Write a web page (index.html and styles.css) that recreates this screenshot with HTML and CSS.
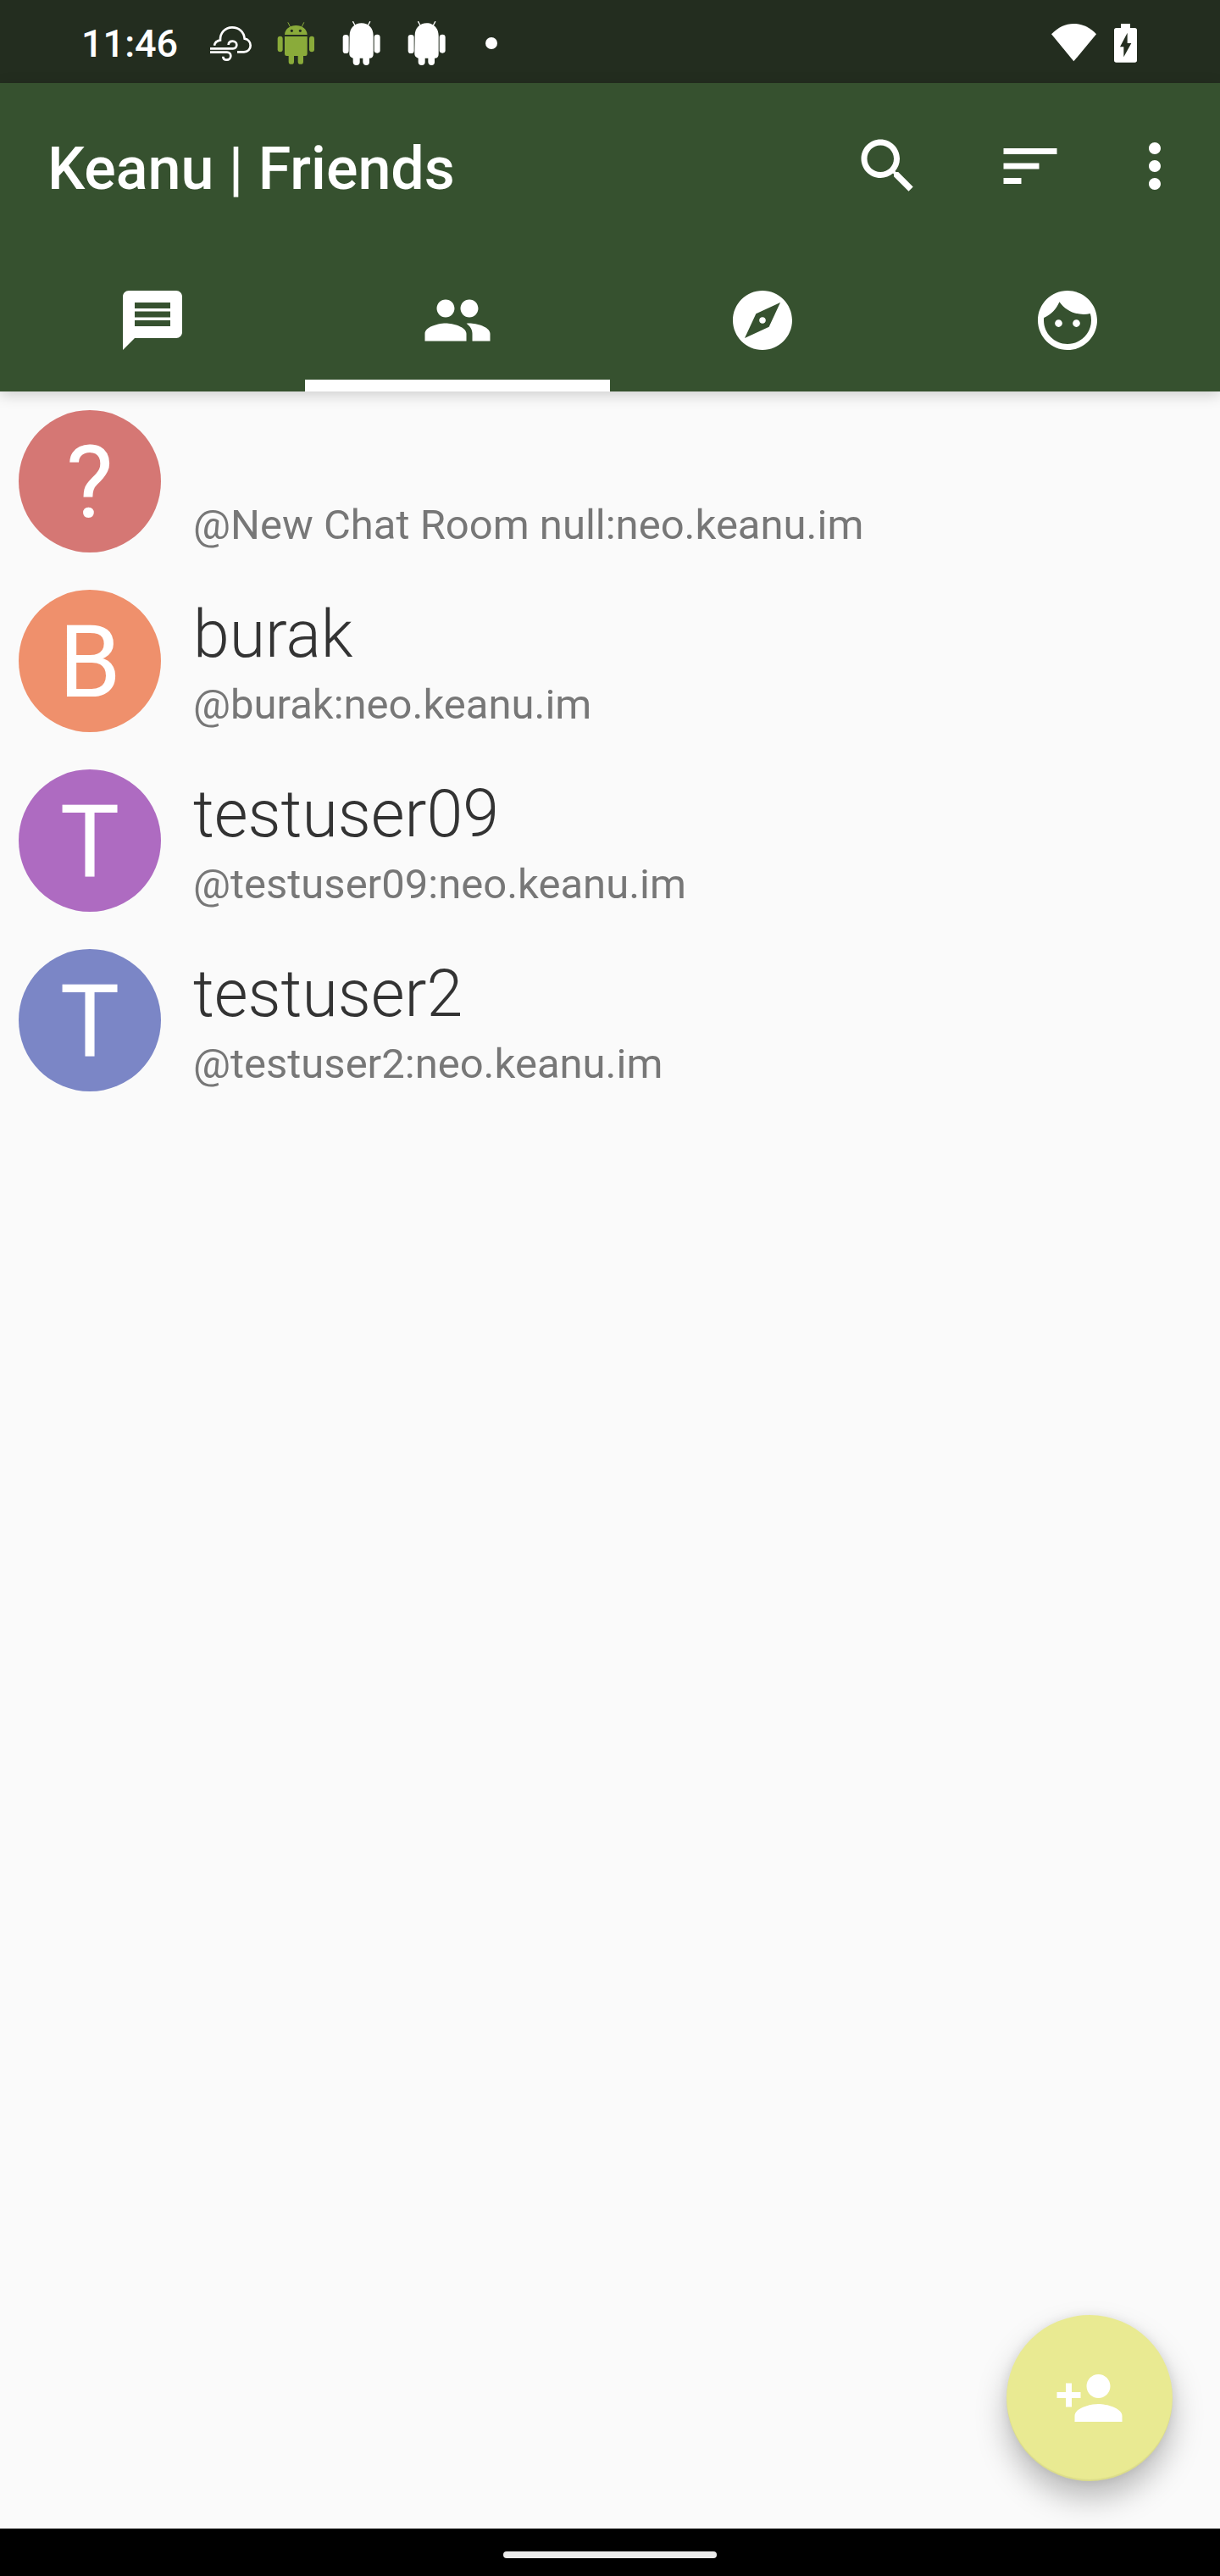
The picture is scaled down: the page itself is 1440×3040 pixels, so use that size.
FILE: index.html
```html
<!DOCTYPE html>
<html lang="en">
<head>
<meta charset="utf-8">
<meta name="viewport" content="width=device-width, initial-scale=1">
<title>Keanu | Friends</title>
<link rel="stylesheet" href="styles.css">
</head>
<body>
<div class="status-bar">
  <time class="clock">11:46</time>
  <div class="notifications">
    <svg class="notification" viewBox="462 57 231 180" aria-hidden="true">
      <g fill="none" stroke="#fff" stroke-width="8">
        <path d="M519 161c2-11 9-17 21-19c-1-26 17-45 42-45c24 0 42 16 44 40c12 2 21 12 21 24c0 13-10 23-23 23h-24"/>
        <path d="M504 172h81c8 0 13-6 13-13s-6-13-14-13c-9 0-15 5-15 13"/>
        <path d="M504 185h60c8 0 13 6 13 13s-6 14-14 14s-13-5-13-12"/>
      </g>
    </svg>
    <svg class="notification" viewBox="693 57 231 180" fill="#8aab3a" aria-hidden="true">
      <path d="M780 80l7 14M836 80l-7 14" stroke="#8aab3a" stroke-width="3" stroke-linecap="round"/>
      <path fill-rule="evenodd" d="M768 123c1-20 18-33 40-33s39 13 40 33zM793 104a5 5 0 1 0 0 10a5 5 0 0 0 0-10zM823 104a5 5 0 1 0 0 10a5 5 0 0 0 0-10z"/>
      <path d="M768 129h80v62q0 7-7 7h-7v20a9 9 0 0 1-19 0v-20h-14v20a9 9 0 0 1-19 0v-20h-7q-7 0-7-7z"/>
      <rect x="743" y="128" width="18" height="56" rx="9"/>
      <rect x="855" y="128" width="18" height="56" rx="9"/>
    </svg>
    <svg class="notification" viewBox="924 57 231 180" fill="#fff" aria-hidden="true">
      <path id="robot-antennae" d="M1010 77l7 13M1070 77l-7 13" stroke="#fff" stroke-width="4" stroke-linecap="round"/>
      <g id="robot">
        <path d="M998 126c0-27 18-44 42-44s42 17 42 44v65q0 15-14 15v14q0 11-11 11t-12-11v-14h-11v14q0 11-12 11t-12-11v-14q-13-5-13-15z"/>
        <rect x="974" y="123" width="21" height="66" rx="10"/>
        <rect x="1085" y="122" width="21" height="66" rx="10"/>
      </g>
    </svg>
    <svg class="notification" viewBox="924 57 231 180" fill="#fff" aria-hidden="true">
      <use href="#robot-antennae"/>
      <use href="#robot"/>
    </svg>
    <svg class="notification" viewBox="1386 57 231 180" fill="#fff" aria-hidden="true"><circle cx="1500" cy="153" r="21"/></svg>
  </div>
  <div class="system-icons">
    <svg class="system-icon" viewBox="111 57 183 180" fill="#fff" role="img" aria-label="Wi-Fi"><path d="M123 121c24-25 50-37 79-37s56 12 80 37L202 217z"/></svg>
    <svg class="system-icon" viewBox="294 57 183 180" fill="#fff" role="img" aria-label="Battery charging"><path fill-rule="evenodd" d="M369 84h33v15h16q8 0 8 8v106q0 8-8 8h-65q-8 0-8-8v-106q0-8 8-8h16zM392 116l-26 50h13v36l27-49h-14z"/></svg>
  </div>
</div>

<header class="app-header">
  <div class="toolbar">
    <h1 class="title">Keanu | Friends</h1>
    <button class="action" type="button" aria-label="Search">
      <svg class="icon" viewBox="0 0 24 24"><path d="M15.5 14h-.79l-.28-.27C15.41 12.59 16 11.11 16 9.5 16 5.91 13.09 3 9.5 3S3 5.91 3 9.5 5.91 16 9.5 16c1.61 0 3.09-.59 4.23-1.57l.27.28v.79l5 4.99L20.49 19l-4.99-5zm-6 0C7.01 14 5 11.99 5 9.5S7.01 5 9.5 5 14 7.01 14 9.5 11.99 14 9.5 14z"/></svg>
    </button>
    <button class="action" type="button" aria-label="Sort">
      <svg class="icon" viewBox="0 0 24 24"><path d="M3 18h6v-2H3v2zM3 6v2h18V6H3zm0 7h12v-2H3v2z"/></svg>
    </button>
    <button class="action action-more" type="button" aria-label="More options">
      <svg class="icon" viewBox="0 0 24 24"><path d="M12 8c1.100 0 2-.9 2-2s-.9-2-2-2-2 .9-2 2 .9 2 2 2zm0 2c-1.100 0-2 .9-2 2s.9 2 2 2 2-.9 2-2-.9-2-2-2zm0 6c-1.100 0-2 .9-2 2s.9 2 2 2 2-.9 2-2-.9-2-2-2z"/></svg>
    </button>
  </div>
  <nav class="tabs">
    <a class="tab" href="#chats" aria-label="Chats">
      <svg class="icon" viewBox="0 0 24 24"><path d="M20 2H4c-1.100 0-1.990.9-1.990 2L2 22l4-4h14c1.100 0 2-.9 2-2V4c0-1.100-.9-2-2-2zM18 14H6v-2h12v2zm0-3H6V9h12v2zm0-3H6V6h12v2z"/></svg>
    </a>
    <a class="tab tab-active" href="#friends" aria-label="Friends" aria-current="page">
      <svg class="icon" viewBox="0 0 24 24"><path d="M16 11c1.660 0 2.990-1.340 2.990-3S17.660 5 16 5c-1.660 0-3 1.340-3 3s1.340 3 3 3zm-8 0c1.660 0 2.990-1.340 2.990-3S9.660 5 8 5C6.340 5 5 6.340 5 8s1.340 3 3 3zm0 2c-2.330 0-7 1.170-7 3.500V19h14v-2.500c0-2.330-4.670-3.500-7-3.500zm8 0c-.29 0-.62.020-.97.050 1.160.84 1.970 1.970 1.970 3.450V19h6v-2.500c0-2.330-4.670-3.500-7-3.500z"/></svg>
    </a>
    <a class="tab" href="#discover" aria-label="Discover">
      <svg class="icon" viewBox="0 0 24 24"><path d="M12 10.900c-.61 0-1.100.49-1.100 1.100s.49 1.100 1.100 1.100c.61 0 1.100-.49 1.100-1.100s-.49-1.100-1.100-1.100zM12 2C6.480 2 2 6.480 2 12s4.480 10 10 10 10-4.480 10-10S17.520 2 12 2zm2.190 12.190L6 18l3.810-8.190L18 6l-3.810 8.190z"/></svg>
    </a>
    <a class="tab" href="#profile" aria-label="Profile">
      <svg class="icon" viewBox="0 0 24 24"><path d="M9 11.750c-.69 0-1.250.56-1.250 1.250s.56 1.250 1.250 1.250 1.250-.56 1.250-1.250-.56-1.250-1.250-1.250zm6 0c-.69 0-1.250.56-1.250 1.250s.56 1.250 1.250 1.250 1.250-.56 1.250-1.250-.56-1.250-1.250-1.250zM12 2C6.480 2 2 6.480 2 12s4.480 10 10 10 10-4.480 10-10S17.520 2 12 2zm0 18c-4.410 0-8-3.590-8-8 0-.29.020-.58.050-.86 2.360-1.050 4.230-2.980 5.210-5.370C11.070 8.330 14.050 10 17.420 10c.78 0 1.530-.09 2.250-.26.21.71.33 1.470.33 2.260 0 4.410-3.590 8-8 8z"/></svg>
    </a>
  </nav>
</header>

<main class="content">
  <ul class="friends">
    <li class="friend">
      <span class="avatar avatar-red">?</span>
      <div class="details">
        <span class="name"></span>
        <span class="address">@New Chat Room null:neo.keanu.im</span>
      </div>
    </li>
    <li class="friend">
      <span class="avatar avatar-orange">B</span>
      <div class="details">
        <span class="name">burak</span>
        <span class="address">@burak:neo.keanu.im</span>
      </div>
    </li>
    <li class="friend">
      <span class="avatar avatar-purple">T</span>
      <div class="details">
        <span class="name">testuser09</span>
        <span class="address">@testuser09:neo.keanu.im</span>
      </div>
    </li>
    <li class="friend">
      <span class="avatar avatar-blue">T</span>
      <div class="details">
        <span class="name">testuser2</span>
        <span class="address">@testuser2:neo.keanu.im</span>
      </div>
    </li>
  </ul>
  <button class="add-friend" type="button" aria-label="Add friend">
    <svg class="icon" viewBox="0 0 24 24"><path d="M15 12c2.210 0 4-1.790 4-4s-1.790-4-4-4-4 1.790-4 4 1.790 4 4 4zm-9-2V7H4v3H1v2h3v3h2v-3h3v-2H6zm9 4c-2.670 0-8 1.340-8 4v2h16v-2c0-2.660-5.330-4-8-4z"/></svg>
  </button>
</main>

<div class="gesture-bar"><span class="gesture-handle"></span></div>
</body>
</html>
```
FILE: styles.css
```css
* {
  box-sizing: border-box;
}

body {
  margin: 0;
  min-height: 100vh;
  display: flex;
  flex-direction: column;
  background: #fafafa;
  font-family: Roboto, "Liberation Sans", sans-serif;
}

button {
  border: 0;
  padding: 0;
  background: none;
  color: inherit;
  font: inherit;
}

.icon {
  display: block;
  width: 84px;
  height: 84px;
  fill: #fff;
}

/* System status bar */
.status-bar {
  display: flex;
  align-items: center;
  height: 98px;
  padding: 0 81px 0 96px;
  background: #232d1f;
  color: #fff;
}

.clock {
  width: 138px;
  padding-top: 6px;
  font-size: 45px;
  line-height: 58px;
  font-weight: 500;
}

.notifications,
.system-icons {
  display: flex;
}

.system-icons {
  margin-left: auto;
}

.notification {
  width: 77px;
  height: 60px;
}

.system-icon {
  width: 61px;
  height: 60px;
}

/* App bar and tabs */
.app-header {
  position: relative;
  z-index: 1;
  background: #36512f;
  color: #fff;
  box-shadow: 0 4px 16px rgba(0, 0, 0, 0.18);
}

.toolbar {
  display: flex;
  align-items: center;
  height: 196px;
  padding: 0 14px 0 56px;
}

.title {
  flex: 1;
  margin: 0;
  padding-top: 6px;
  font-size: 70px;
  line-height: 84px;
  font-weight: 500;
}

.action {
  display: flex;
  align-items: center;
  justify-content: center;
  width: 168px;
  height: 168px;
}

.action-more {
  width: 126px;
}

.tabs {
  display: grid;
  grid-template-columns: repeat(4, 1fr);
  height: 168px;
}

.tab {
  display: flex;
  align-items: center;
  justify-content: center;
}

.tab-active {
  box-shadow: inset 0 -14px #fff;
}

/* Friend list */
.content {
  position: relative;
  flex: 1;
  overflow: hidden;
}

.friends {
  margin: 0;
  padding: 0;
  list-style: none;
}

.friend {
  display: flex;
  gap: 38px;
  padding: 22px;
}

.avatar {
  flex: none;
  width: 168px;
  height: 168px;
  padding-top: 2px;
  border-radius: 50%;
  color: #fff;
  font-size: 118px;
  line-height: 168px;
  text-align: center;
}

.avatar-red {
  background: #d57774;
}

.avatar-orange {
  background: #ef906c;
}

.avatar-purple {
  background: #ae6bc1;
}

.avatar-blue {
  background: #7b86c6;
}

.details {
  display: flex;
  flex-direction: column;
  gap: 8px;
  min-width: 0;
  padding-top: 8px;
}

.name {
  min-height: 90px;
  color: #333;
  font-size: 77px;
  line-height: 90px;
  font-weight: 300;
}

.address {
  color: #777;
  font-size: 49px;
  line-height: 60px;
}

.add-friend {
  position: absolute;
  right: 56px;
  bottom: 56px;
  display: flex;
  align-items: center;
  justify-content: center;
  width: 196px;
  height: 196px;
  border-radius: 50%;
  background: #e9ea92;
  box-shadow: 0 20px 36px rgba(0, 0, 0, 0.26), 0 0 12px rgba(0, 0, 0, 0.08), inset 0 -2px 1px rgba(0, 0, 0, 0.06);
}

/* Gesture navigation */
.gesture-bar {
  display: flex;
  align-items: center;
  justify-content: center;
  height: 56px;
  padding-top: 6px;
  background: #000;
}

.gesture-handle {
  width: 252px;
  height: 8px;
  border-radius: 4px;
  background: #ececec;
}
```
